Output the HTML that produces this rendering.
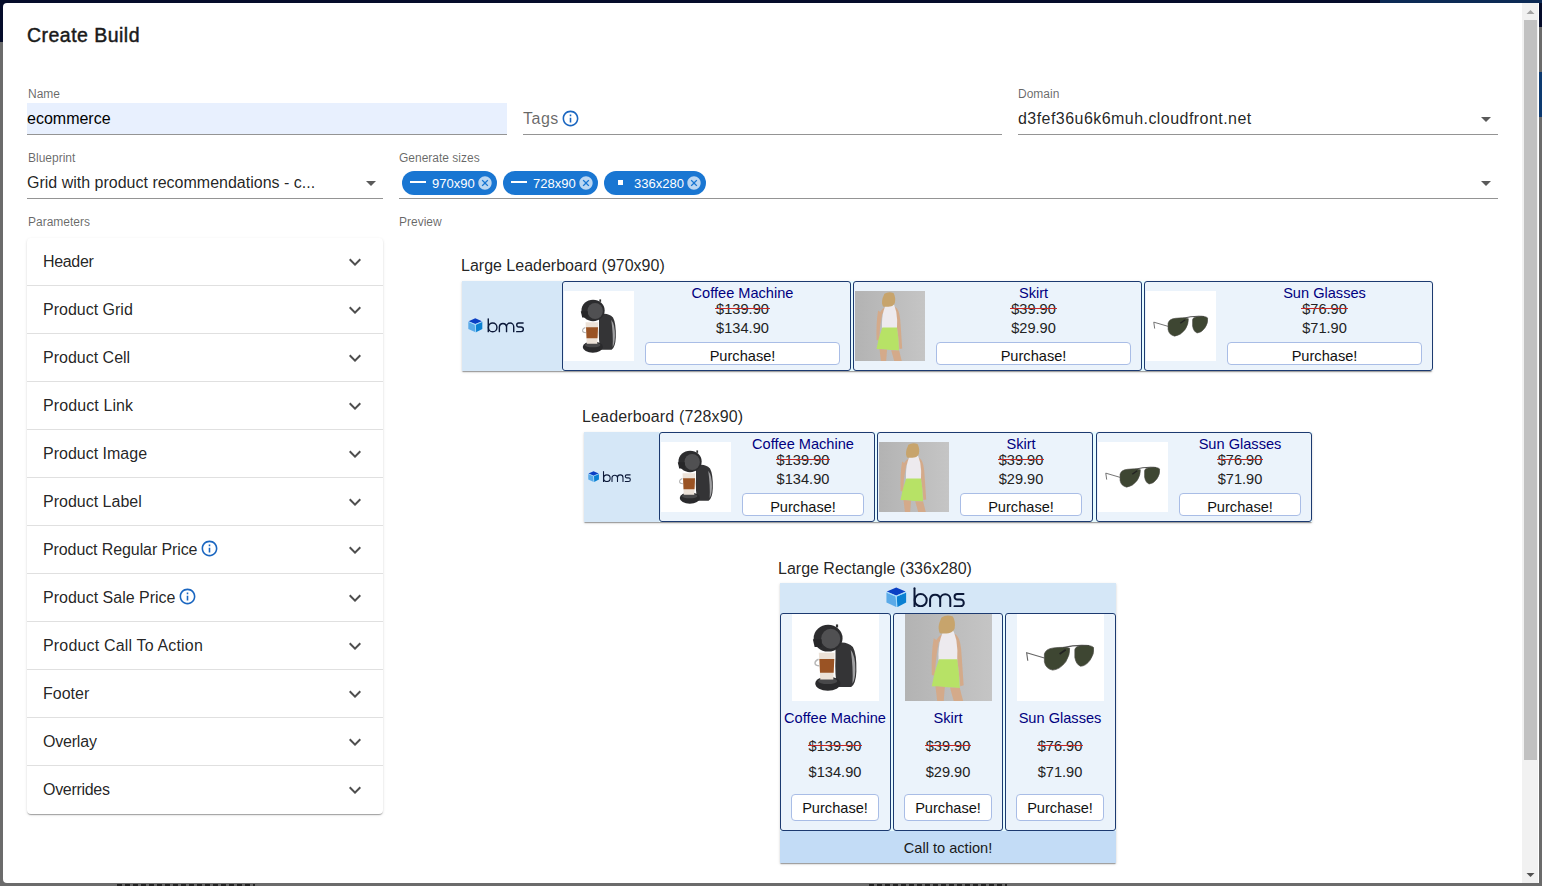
<!DOCTYPE html>
<html><head><meta charset="utf-8">
<style>
*{box-sizing:border-box;margin:0;padding:0}
html,body{width:1542px;height:886px;overflow:hidden}
body{position:relative;background:#6b6b6b;font-family:"Liberation Sans",sans-serif;color:rgba(0,0,0,0.87)}
.abs{position:absolute}
.t{position:absolute;white-space:nowrap;line-height:1}
svg.abs{display:block}
.st{position:relative}
.st::after{content:'';position:absolute;left:-1px;right:-1px;top:7px;height:1.4px;background:#c62828}
</style></head><body>
<div class="abs" style="left:0px;top:0px;width:1542px;height:42px;background:#050c2a"></div>
<div class="abs" style="left:1380px;top:0px;width:162px;height:3px;background:#0c2a55"></div>
<div class="abs" style="left:1539px;top:27px;width:3px;height:45px;background:#6b6b6b"></div>
<div class="abs" style="left:1539px;top:72px;width:3px;height:45px;background:#0d3a70"></div>
<div class="abs" style="left:3px;top:3px;width:1536px;height:880px;background:#fff;border-radius:4px 0 0 4px"></div>
<div class="abs" style="left:117px;top:884px;width:138px;height:2px;background:repeating-linear-gradient(90deg,#222 0 5px,#666 5px 8px)"></div>
<div class="abs" style="left:869px;top:884px;width:138px;height:2px;background:repeating-linear-gradient(90deg,#222 0 5px,#666 5px 8px)"></div>
<div class="abs" style="left:1522px;top:3px;width:16px;height:880px;background:#f1f1f1"></div>
<div class="abs" style="left:1524px;top:20px;width:13px;height:740px;background:#c1c1c1"></div>
<svg class="abs" style="left:1526px;top:9px" width="9" height="6" viewBox="0 0 9 6"><path d="M0.5 5 L4.5 1 L8.5 5z" fill="#a3a3a3"/></svg>
<svg class="abs" style="left:1526px;top:872px" width="9" height="6" viewBox="0 0 9 6"><path d="M0.5 1 L4.5 5 L8.5 1z" fill="#505050"/></svg>
<div class="t" style="left:27px;top:26.49px;font-size:19.5px;color:#1a1a1a;-webkit-text-stroke:0.45px #1a1a1a;letter-spacing:0.47px;">Create Build</div>
<div class="t" style="left:28px;top:87.84px;font-size:12px;color:rgba(0,0,0,0.6);">Name</div>
<div class="abs" style="left:27px;top:103px;width:480px;height:31px;background:#e8f0fe"></div>
<div class="abs" style="left:27px;top:134px;width:480px;height:1px;background:rgba(0,0,0,0.42)"></div>
<div class="t" style="left:27px;top:111.46px;font-size:16px;color:#000;">ecommerce</div>
<div class="t" style="left:523px;top:110.96px;font-size:16px;color:rgba(0,0,0,0.6);letter-spacing:0.5px;">Tags</div>
<svg class="abs" style="left:560.8px;top:108.8px" width="19" height="19" viewBox="0 0 24 24" fill="#1a66c0"><path d="M11 7h2v2h-2zm0 4h2v6h-2zm1-9C6.48 2 2 6.48 2 12s4.48 10 10 10 10-4.48 10-10S17.52 2 12 2zm0 18c-4.41 0-8-3.59-8-8s3.59-8 8-8 8 3.59 8 8-3.59 8-8 8z"/></svg>
<div class="abs" style="left:523px;top:134px;width:479px;height:1px;background:rgba(0,0,0,0.42)"></div>
<div class="t" style="left:1018px;top:87.84px;font-size:12px;color:rgba(0,0,0,0.6);">Domain</div>
<div class="t" style="left:1018px;top:111.46px;font-size:16px;letter-spacing:0.45px;">d3fef36u6k6muh.cloudfront.net</div>
<svg class="abs" style="left:1474px;top:107px" width="24" height="24" viewBox="0 0 24 24" fill="#5a5a5a"><path d="M7 10l5 5 5-5z"/></svg>
<div class="abs" style="left:1018px;top:134px;width:480px;height:1px;background:rgba(0,0,0,0.42)"></div>
<div class="t" style="left:28px;top:151.84px;font-size:12px;color:rgba(0,0,0,0.6);">Blueprint</div>
<div class="t" style="left:27px;top:175.46px;font-size:16px;">Grid with product recommendations - c...</div>
<svg class="abs" style="left:359px;top:171px" width="24" height="24" viewBox="0 0 24 24" fill="#5a5a5a"><path d="M7 10l5 5 5-5z"/></svg>
<div class="abs" style="left:27px;top:198px;width:356px;height:1px;background:rgba(0,0,0,0.42)"></div>
<div class="t" style="left:399px;top:151.84px;font-size:12px;color:rgba(0,0,0,0.6);">Generate sizes</div>
<div class="abs" style="left:399px;top:198px;width:1099px;height:1px;background:rgba(0,0,0,0.42)"></div>
<svg class="abs" style="left:1474px;top:171px" width="24" height="24" viewBox="0 0 24 24" fill="#5a5a5a"><path d="M7 10l5 5 5-5z"/></svg>
<div class="abs" style="left:402px;top:171px;width:95px;height:24px;background:#1976d2;border-radius:12px"></div>
<div class="abs" style="left:410px;top:181px;width:16px;height:2px;background:#fff"></div>
<div class="t" style="left:432px;top:176.50px;font-size:13px;color:#fff;">970x90</div>
<svg class="abs" style="left:477px;top:175px" width="16" height="16" viewBox="0 0 24 24" fill="rgba(255,255,255,0.7)"><path d="M12 2C6.47 2 2 6.47 2 12s4.47 10 10 10 10-4.47 10-10S17.53 2 12 2zm5 13.59L15.59 17 12 13.41 8.41 17 7 15.59 10.59 12 7 8.41 8.41 7 12 10.59 15.59 7 17 8.41 13.41 12 17 15.59z"/></svg>
<div class="abs" style="left:503px;top:171px;width:95px;height:24px;background:#1976d2;border-radius:12px"></div>
<div class="abs" style="left:511px;top:181px;width:16px;height:2px;background:#fff"></div>
<div class="t" style="left:533px;top:176.50px;font-size:13px;color:#fff;">728x90</div>
<svg class="abs" style="left:578px;top:175px" width="16" height="16" viewBox="0 0 24 24" fill="rgba(255,255,255,0.7)"><path d="M12 2C6.47 2 2 6.47 2 12s4.47 10 10 10 10-4.47 10-10S17.53 2 12 2zm5 13.59L15.59 17 12 13.41 8.41 17 7 15.59 10.59 12 7 8.41 8.41 7 12 10.59 15.59 7 17 8.41 13.41 12 17 15.59z"/></svg>
<div class="abs" style="left:604px;top:171px;width:102px;height:24px;background:#1976d2;border-radius:12px"></div>
<div class="abs" style="left:618px;top:180px;width:5px;height:5px;background:#fff"></div>
<div class="t" style="left:634px;top:176.50px;font-size:13px;color:#fff;">336x280</div>
<svg class="abs" style="left:686px;top:175px" width="16" height="16" viewBox="0 0 24 24" fill="rgba(255,255,255,0.7)"><path d="M12 2C6.47 2 2 6.47 2 12s4.47 10 10 10 10-4.47 10-10S17.53 2 12 2zm5 13.59L15.59 17 12 13.41 8.41 17 7 15.59 10.59 12 7 8.41 8.41 7 12 10.59 15.59 7 17 8.41 13.41 12 17 15.59z"/></svg>
<div class="t" style="left:28px;top:215.84px;font-size:12px;color:rgba(0,0,0,0.6);">Parameters</div>
<div class="t" style="left:399px;top:215.84px;font-size:12px;color:rgba(0,0,0,0.6);">Preview</div>
<div class="abs" style="left:27px;top:238px;width:356px;height:576px;background:#fff;border-radius:4px;box-shadow:0px 2px 1px -1px rgba(0,0,0,0.2),0px 1px 1px 0px rgba(0,0,0,0.14),0px 1px 3px 0px rgba(0,0,0,0.12)"></div>
<div class="t" style="left:43px;top:254.46px;font-size:16px;letter-spacing:-0.33px;">Header</div>
<svg class="abs" style="left:343px;top:250px" width="24" height="24" viewBox="0 0 24 24" fill="#4e4e4e"><path d="M16.59 8.59 12 13.17 7.41 8.59 6 10l6 6 6-6z"/></svg>
<div class="abs" style="left:27px;top:285px;width:356px;height:1px;background:rgba(0,0,0,0.12)"></div>
<div class="t" style="left:43px;top:302.46px;font-size:16px;letter-spacing:0px;">Product Grid</div>
<svg class="abs" style="left:343px;top:298px" width="24" height="24" viewBox="0 0 24 24" fill="#4e4e4e"><path d="M16.59 8.59 12 13.17 7.41 8.59 6 10l6 6 6-6z"/></svg>
<div class="abs" style="left:27px;top:333px;width:356px;height:1px;background:rgba(0,0,0,0.12)"></div>
<div class="t" style="left:43px;top:350.46px;font-size:16px;letter-spacing:0px;">Product Cell</div>
<svg class="abs" style="left:343px;top:346px" width="24" height="24" viewBox="0 0 24 24" fill="#4e4e4e"><path d="M16.59 8.59 12 13.17 7.41 8.59 6 10l6 6 6-6z"/></svg>
<div class="abs" style="left:27px;top:381px;width:356px;height:1px;background:rgba(0,0,0,0.12)"></div>
<div class="t" style="left:43px;top:398.46px;font-size:16px;letter-spacing:0.1px;">Product Link</div>
<svg class="abs" style="left:343px;top:394px" width="24" height="24" viewBox="0 0 24 24" fill="#4e4e4e"><path d="M16.59 8.59 12 13.17 7.41 8.59 6 10l6 6 6-6z"/></svg>
<div class="abs" style="left:27px;top:429px;width:356px;height:1px;background:rgba(0,0,0,0.12)"></div>
<div class="t" style="left:43px;top:446.46px;font-size:16px;letter-spacing:0px;">Product Image</div>
<svg class="abs" style="left:343px;top:442px" width="24" height="24" viewBox="0 0 24 24" fill="#4e4e4e"><path d="M16.59 8.59 12 13.17 7.41 8.59 6 10l6 6 6-6z"/></svg>
<div class="abs" style="left:27px;top:477px;width:356px;height:1px;background:rgba(0,0,0,0.12)"></div>
<div class="t" style="left:43px;top:494.46px;font-size:16px;letter-spacing:0px;">Product Label</div>
<svg class="abs" style="left:343px;top:490px" width="24" height="24" viewBox="0 0 24 24" fill="#4e4e4e"><path d="M16.59 8.59 12 13.17 7.41 8.59 6 10l6 6 6-6z"/></svg>
<div class="abs" style="left:27px;top:525px;width:356px;height:1px;background:rgba(0,0,0,0.12)"></div>
<div class="t" style="left:43px;top:542.46px;font-size:16px;letter-spacing:-0.1px;">Product Regular Price</div>
<svg class="abs" style="left:200.4px;top:538.7px" width="19" height="19" viewBox="0 0 24 24" fill="#1a66c0"><path d="M11 7h2v2h-2zm0 4h2v6h-2zm1-9C6.48 2 2 6.48 2 12s4.48 10 10 10 10-4.48 10-10S17.52 2 12 2zm0 18c-4.41 0-8-3.59-8-8s3.59-8 8-8 8 3.59 8 8-3.59 8-8 8z"/></svg>
<svg class="abs" style="left:343px;top:538px" width="24" height="24" viewBox="0 0 24 24" fill="#4e4e4e"><path d="M16.59 8.59 12 13.17 7.41 8.59 6 10l6 6 6-6z"/></svg>
<div class="abs" style="left:27px;top:573px;width:356px;height:1px;background:rgba(0,0,0,0.12)"></div>
<div class="t" style="left:43px;top:590.46px;font-size:16px;letter-spacing:0px;">Product Sale Price</div>
<svg class="abs" style="left:177.5px;top:586.7px" width="19" height="19" viewBox="0 0 24 24" fill="#1a66c0"><path d="M11 7h2v2h-2zm0 4h2v6h-2zm1-9C6.48 2 2 6.48 2 12s4.48 10 10 10 10-4.48 10-10S17.52 2 12 2zm0 18c-4.41 0-8-3.59-8-8s3.59-8 8-8 8 3.59 8 8-3.59 8-8 8z"/></svg>
<svg class="abs" style="left:343px;top:586px" width="24" height="24" viewBox="0 0 24 24" fill="#4e4e4e"><path d="M16.59 8.59 12 13.17 7.41 8.59 6 10l6 6 6-6z"/></svg>
<div class="abs" style="left:27px;top:621px;width:356px;height:1px;background:rgba(0,0,0,0.12)"></div>
<div class="t" style="left:43px;top:638.46px;font-size:16px;letter-spacing:0.17px;">Product Call To Action</div>
<svg class="abs" style="left:343px;top:634px" width="24" height="24" viewBox="0 0 24 24" fill="#4e4e4e"><path d="M16.59 8.59 12 13.17 7.41 8.59 6 10l6 6 6-6z"/></svg>
<div class="abs" style="left:27px;top:669px;width:356px;height:1px;background:rgba(0,0,0,0.12)"></div>
<div class="t" style="left:43px;top:686.46px;font-size:16px;letter-spacing:0px;">Footer</div>
<svg class="abs" style="left:343px;top:682px" width="24" height="24" viewBox="0 0 24 24" fill="#4e4e4e"><path d="M16.59 8.59 12 13.17 7.41 8.59 6 10l6 6 6-6z"/></svg>
<div class="abs" style="left:27px;top:717px;width:356px;height:1px;background:rgba(0,0,0,0.12)"></div>
<div class="t" style="left:43px;top:734.46px;font-size:16px;letter-spacing:-0.2px;">Overlay</div>
<svg class="abs" style="left:343px;top:730px" width="24" height="24" viewBox="0 0 24 24" fill="#4e4e4e"><path d="M16.59 8.59 12 13.17 7.41 8.59 6 10l6 6 6-6z"/></svg>
<div class="abs" style="left:27px;top:765px;width:356px;height:1px;background:rgba(0,0,0,0.12)"></div>
<div class="t" style="left:43px;top:782.46px;font-size:16px;letter-spacing:-0.3px;">Overrides</div>
<svg class="abs" style="left:343px;top:778px" width="24" height="24" viewBox="0 0 24 24" fill="#4e4e4e"><path d="M16.59 8.59 12 13.17 7.41 8.59 6 10l6 6 6-6z"/></svg>
<div class="t" style="left:461px;top:258.46px;font-size:16px;">Large Leaderboard (970x90)</div>
<div class="abs" style="left:462px;top:281px;width:970px;height:90px;background:#e6fbff;box-shadow:0px 2px 1px -1px rgba(0,0,0,0.2),0px 1px 1px 0px rgba(0,0,0,0.14),0px 1px 3px 0px rgba(0,0,0,0.12)"></div>
<div class="abs" style="left:462px;top:281px;width:100px;height:90px;background:#d5e7f7"></div>
<svg class="abs" style="left:468px;top:318px" width="56.2" height="14.51" viewBox="0 0 79 20.4"><g>
<path d="M10.2 0.4 L19.6 4.5 L10.2 8.6 L0.8 4.5z" fill="#0a3fc4"/>
<path d="M0.4 5.4 L9.6 9.4 L10.6 20.2 L0.4 15.5z" fill="#5aaae8"/>
<path d="M10.8 9.4 L20.1 5.4 L20.1 15.5 L11.2 20.2z" fill="#0a80d2"/>
<path d="M0.4 5.2 L10.2 9.2 L20.1 5.2 M10.2 9.2 L10.9 20.4" stroke="#9ad8ff" stroke-width="0.9" fill="none"/>
<g fill="none" stroke="#0b1838" stroke-width="2" stroke-linecap="round">
<path d="M28.5 1.2 V19.2"/>
<ellipse cx="34.7" cy="13.2" rx="6" ry="6.1"/>
<path d="M44.1 19.2 V12.2 A5.1 5.1 0 0 1 54.2 12.2 V19.2 M54.2 12.2 A5.05 5.05 0 0 1 64.3 12.2 V19.2"/>
<path d="M77.5 7.1 H71.3 A2.75 2.75 0 0 0 71.3 12.6 H74.5 A3.3 3.3 0 0 1 74.5 19.2 H68.5"/>
</g></g></svg>
<div class="abs" style="left:562px;top:281px;width:289px;height:90px;background:#ebf3fb;border:1px solid #1c3a70;border-radius:3px"></div>
<svg class="abs" style="left:564px;top:291px" width="70" height="70" viewBox="0 0 100 100" preserveAspectRatio="none"><rect width="100" height="100" fill="#fff"/>
<path d="M50 34 Q62 30 70 38 Q74.5 46 74 66 Q73.5 80 68 84 L52 84 Q49 70 50 50z" fill="#343436"/>
<path d="M67.5 41 Q73 48 72.8 64 Q72.5 76 69.5 80 Q70.5 62 67.5 41z" fill="#a0a0a2"/>
<ellipse cx="41.5" cy="27.8" rx="16.6" ry="15.4" fill="#2c2c2e"/>
<ellipse cx="44.5" cy="28.5" rx="11" ry="11.5" fill="#505052"/>
<path d="M24 29 L34 29 L34 38 L26 38z" fill="#262628"/>
<rect x="50.5" y="12" width="2.5" height="3.5" fill="#333"/>
<ellipse cx="41.2" cy="80" rx="14.4" ry="8.2" fill="#2a2a2c"/>
<ellipse cx="41" cy="77" rx="11" ry="3.5" fill="#48484a"/>
<path d="M30.8 44.5 L49 44.5 L47.5 75.3 L32.5 75.3z" fill="#ece2d8"/>
<path d="M31.5 51.7 L48.6 51.7 L47.9 67.4 L32.2 67.4z" fill="#9a5324"/>
<path d="M30.5 52 Q26 54 26.5 57 Q27 59.5 31.4 59.6" stroke="#b5b5b5" stroke-width="1.6" fill="none"/></svg>
<div class="t" style="left:542.5px;width:400px;text-align:center;top:285.64px;font-size:14.6px;color:#000080;">Coffee Machine</div>
<div class="t" style="left:542.5px;width:400px;text-align:center;top:301.64px;font-size:14.6px;color:#222;"><span class="st">$139.90</span></div>
<div class="t" style="left:542.5px;width:400px;text-align:center;top:320.64px;font-size:14.6px;color:#222;">$134.90</div>
<div class="abs" style="left:645px;top:342px;width:195px;height:23px;background:#fff;border:1px solid #a9bde6;border-radius:4px"></div>
<div class="t" style="left:542.5px;width:400px;text-align:center;top:348.64px;font-size:14.6px;color:#111;">Purchase!</div>
<div class="abs" style="left:853px;top:281px;width:289px;height:90px;background:#ebf3fb;border:1px solid #1c3a70;border-radius:3px"></div>
<svg class="abs" style="left:855px;top:291px" width="70" height="70" viewBox="0 0 100 100" preserveAspectRatio="none"><defs><linearGradient id="bgs" x1="0" x2="1"><stop offset="0" stop-color="#b3b3b3"/><stop offset="1" stop-color="#c5c5c5"/></linearGradient></defs>
<rect width="100" height="100" fill="url(#bgs)"/>
<path d="M33 28 Q30 45 30.8 70 L34.5 71 Q35 50 39 32z" fill="#d4aa8a"/>
<path d="M57.6 23 Q63 26 64.5 40 Q66 60 67.4 82 L63.5 83 Q62 62 58 40z" fill="#d4aa8a"/>
<path d="M35 32 Q39 24 44 23 L56 22 Q60 24 60 32z" fill="#d4aa8a"/>
<path d="M44 19 Q50 17 56 20 L59 30 Q61 42 60 53.5 L38.5 53.5 Q38 38 41 28z" fill="#edeaee"/>
<path d="M42 4 Q48 0 55 3 Q58.5 9 57 17 Q54 22 50 22 Q45 23 40 22 Q37.5 17 39.5 10z" fill="#c7a46c"/>
<path d="M39 52 L60 52 Q62.5 68 63 85 L30.8 83 Q33 68 39 52z" fill="#b7e266"/>
<path d="M35 83 L45.8 84 L44.5 100 L37 100z" fill="#d4aa8a"/>
<path d="M51.7 84.5 L63 85 L66.8 100 L56 100z" fill="#d4aa8a"/></svg>
<div class="t" style="left:833.5px;width:400px;text-align:center;top:285.64px;font-size:14.6px;color:#000080;">Skirt</div>
<div class="t" style="left:833.5px;width:400px;text-align:center;top:301.64px;font-size:14.6px;color:#222;"><span class="st">$39.90</span></div>
<div class="t" style="left:833.5px;width:400px;text-align:center;top:320.64px;font-size:14.6px;color:#222;">$29.90</div>
<div class="abs" style="left:936px;top:342px;width:195px;height:23px;background:#fff;border:1px solid #a9bde6;border-radius:4px"></div>
<div class="t" style="left:833.5px;width:400px;text-align:center;top:348.64px;font-size:14.6px;color:#111;">Purchase!</div>
<div class="abs" style="left:1144px;top:281px;width:289px;height:90px;background:#ebf3fb;border:1px solid #1c3a70;border-radius:3px"></div>
<svg class="abs" style="left:1146px;top:291px" width="70" height="70" viewBox="0 0 100 100" preserveAspectRatio="none"><rect width="100" height="100" fill="#fff"/>
<path d="M12.4 53.7 L11.1 44.5 L31.5 50.5" stroke="#666" stroke-width="1.3" fill="none"/>
<path d="M53 38.8 Q68 35 83 36.5" stroke="#555" stroke-width="1.5" fill="none"/>
<path d="M31.5 46 Q33 40 42 39 Q55 37.5 60.5 39.5 Q61 47 56 55 Q49 64 41 64.5 Q33 63 31.5 55z" fill="#3e4632" stroke="#4a4a44" stroke-width="0.8"/>
<path d="M66.5 41 Q67 37 75 36.3 Q85 35.5 88 38.5 Q89 46 84 53 Q79 60 73 60 Q68 58 66.5 50z" fill="#3e4632" stroke="#4a4a44" stroke-width="0.8"/>
<path d="M49 46 L56 41" stroke="#222" stroke-width="2"/></svg>
<div class="t" style="left:1124.5px;width:400px;text-align:center;top:285.64px;font-size:14.6px;color:#000080;">Sun Glasses</div>
<div class="t" style="left:1124.5px;width:400px;text-align:center;top:301.64px;font-size:14.6px;color:#222;"><span class="st">$76.90</span></div>
<div class="t" style="left:1124.5px;width:400px;text-align:center;top:320.64px;font-size:14.6px;color:#222;">$71.90</div>
<div class="abs" style="left:1227px;top:342px;width:195px;height:23px;background:#fff;border:1px solid #a9bde6;border-radius:4px"></div>
<div class="t" style="left:1124.5px;width:400px;text-align:center;top:348.64px;font-size:14.6px;color:#111;">Purchase!</div>
<div class="t" style="left:582px;top:408.96px;font-size:16px;letter-spacing:0.15px;">Leaderboard (728x90)</div>
<div class="abs" style="left:584px;top:432px;width:728px;height:90px;background:#e6fbff;box-shadow:0px 2px 1px -1px rgba(0,0,0,0.2),0px 1px 1px 0px rgba(0,0,0,0.14),0px 1px 3px 0px rgba(0,0,0,0.12)"></div>
<div class="abs" style="left:584px;top:432px;width:75px;height:90px;background:#d5e7f7"></div>
<svg class="abs" style="left:588px;top:471px" width="43" height="11.10" viewBox="0 0 79 20.4"><g>
<path d="M10.2 0.4 L19.6 4.5 L10.2 8.6 L0.8 4.5z" fill="#0a3fc4"/>
<path d="M0.4 5.4 L9.6 9.4 L10.6 20.2 L0.4 15.5z" fill="#5aaae8"/>
<path d="M10.8 9.4 L20.1 5.4 L20.1 15.5 L11.2 20.2z" fill="#0a80d2"/>
<path d="M0.4 5.2 L10.2 9.2 L20.1 5.2 M10.2 9.2 L10.9 20.4" stroke="#9ad8ff" stroke-width="0.9" fill="none"/>
<g fill="none" stroke="#0b1838" stroke-width="2" stroke-linecap="round">
<path d="M28.5 1.2 V19.2"/>
<ellipse cx="34.7" cy="13.2" rx="6" ry="6.1"/>
<path d="M44.1 19.2 V12.2 A5.1 5.1 0 0 1 54.2 12.2 V19.2 M54.2 12.2 A5.05 5.05 0 0 1 64.3 12.2 V19.2"/>
<path d="M77.5 7.1 H71.3 A2.75 2.75 0 0 0 71.3 12.6 H74.5 A3.3 3.3 0 0 1 74.5 19.2 H68.5"/>
</g></g></svg>
<div class="abs" style="left:659px;top:432px;width:216px;height:90px;background:#ebf3fb;border:1px solid #1c3a70;border-radius:3px"></div>
<svg class="abs" style="left:661px;top:442px" width="70" height="70" viewBox="0 0 100 100" preserveAspectRatio="none"><rect width="100" height="100" fill="#fff"/>
<path d="M50 34 Q62 30 70 38 Q74.5 46 74 66 Q73.5 80 68 84 L52 84 Q49 70 50 50z" fill="#343436"/>
<path d="M67.5 41 Q73 48 72.8 64 Q72.5 76 69.5 80 Q70.5 62 67.5 41z" fill="#a0a0a2"/>
<ellipse cx="41.5" cy="27.8" rx="16.6" ry="15.4" fill="#2c2c2e"/>
<ellipse cx="44.5" cy="28.5" rx="11" ry="11.5" fill="#505052"/>
<path d="M24 29 L34 29 L34 38 L26 38z" fill="#262628"/>
<rect x="50.5" y="12" width="2.5" height="3.5" fill="#333"/>
<ellipse cx="41.2" cy="80" rx="14.4" ry="8.2" fill="#2a2a2c"/>
<ellipse cx="41" cy="77" rx="11" ry="3.5" fill="#48484a"/>
<path d="M30.8 44.5 L49 44.5 L47.5 75.3 L32.5 75.3z" fill="#ece2d8"/>
<path d="M31.5 51.7 L48.6 51.7 L47.9 67.4 L32.2 67.4z" fill="#9a5324"/>
<path d="M30.5 52 Q26 54 26.5 57 Q27 59.5 31.4 59.6" stroke="#b5b5b5" stroke-width="1.6" fill="none"/></svg>
<div class="t" style="left:603px;width:400px;text-align:center;top:436.64px;font-size:14.6px;color:#000080;">Coffee Machine</div>
<div class="t" style="left:603px;width:400px;text-align:center;top:452.64px;font-size:14.6px;color:#222;"><span class="st">$139.90</span></div>
<div class="t" style="left:603px;width:400px;text-align:center;top:471.64px;font-size:14.6px;color:#222;">$134.90</div>
<div class="abs" style="left:742px;top:493px;width:122px;height:23px;background:#fff;border:1px solid #a9bde6;border-radius:4px"></div>
<div class="t" style="left:603px;width:400px;text-align:center;top:499.64px;font-size:14.6px;color:#111;">Purchase!</div>
<div class="abs" style="left:877px;top:432px;width:216px;height:90px;background:#ebf3fb;border:1px solid #1c3a70;border-radius:3px"></div>
<svg class="abs" style="left:879px;top:442px" width="70" height="70" viewBox="0 0 100 100" preserveAspectRatio="none"><defs><linearGradient id="bgs" x1="0" x2="1"><stop offset="0" stop-color="#b3b3b3"/><stop offset="1" stop-color="#c5c5c5"/></linearGradient></defs>
<rect width="100" height="100" fill="url(#bgs)"/>
<path d="M33 28 Q30 45 30.8 70 L34.5 71 Q35 50 39 32z" fill="#d4aa8a"/>
<path d="M57.6 23 Q63 26 64.5 40 Q66 60 67.4 82 L63.5 83 Q62 62 58 40z" fill="#d4aa8a"/>
<path d="M35 32 Q39 24 44 23 L56 22 Q60 24 60 32z" fill="#d4aa8a"/>
<path d="M44 19 Q50 17 56 20 L59 30 Q61 42 60 53.5 L38.5 53.5 Q38 38 41 28z" fill="#edeaee"/>
<path d="M42 4 Q48 0 55 3 Q58.5 9 57 17 Q54 22 50 22 Q45 23 40 22 Q37.5 17 39.5 10z" fill="#c7a46c"/>
<path d="M39 52 L60 52 Q62.5 68 63 85 L30.8 83 Q33 68 39 52z" fill="#b7e266"/>
<path d="M35 83 L45.8 84 L44.5 100 L37 100z" fill="#d4aa8a"/>
<path d="M51.7 84.5 L63 85 L66.8 100 L56 100z" fill="#d4aa8a"/></svg>
<div class="t" style="left:821px;width:400px;text-align:center;top:436.64px;font-size:14.6px;color:#000080;">Skirt</div>
<div class="t" style="left:821px;width:400px;text-align:center;top:452.64px;font-size:14.6px;color:#222;"><span class="st">$39.90</span></div>
<div class="t" style="left:821px;width:400px;text-align:center;top:471.64px;font-size:14.6px;color:#222;">$29.90</div>
<div class="abs" style="left:960px;top:493px;width:122px;height:23px;background:#fff;border:1px solid #a9bde6;border-radius:4px"></div>
<div class="t" style="left:821px;width:400px;text-align:center;top:499.64px;font-size:14.6px;color:#111;">Purchase!</div>
<div class="abs" style="left:1096px;top:432px;width:216px;height:90px;background:#ebf3fb;border:1px solid #1c3a70;border-radius:3px"></div>
<svg class="abs" style="left:1098px;top:442px" width="70" height="70" viewBox="0 0 100 100" preserveAspectRatio="none"><rect width="100" height="100" fill="#fff"/>
<path d="M12.4 53.7 L11.1 44.5 L31.5 50.5" stroke="#666" stroke-width="1.3" fill="none"/>
<path d="M53 38.8 Q68 35 83 36.5" stroke="#555" stroke-width="1.5" fill="none"/>
<path d="M31.5 46 Q33 40 42 39 Q55 37.5 60.5 39.5 Q61 47 56 55 Q49 64 41 64.5 Q33 63 31.5 55z" fill="#3e4632" stroke="#4a4a44" stroke-width="0.8"/>
<path d="M66.5 41 Q67 37 75 36.3 Q85 35.5 88 38.5 Q89 46 84 53 Q79 60 73 60 Q68 58 66.5 50z" fill="#3e4632" stroke="#4a4a44" stroke-width="0.8"/>
<path d="M49 46 L56 41" stroke="#222" stroke-width="2"/></svg>
<div class="t" style="left:1040px;width:400px;text-align:center;top:436.64px;font-size:14.6px;color:#000080;">Sun Glasses</div>
<div class="t" style="left:1040px;width:400px;text-align:center;top:452.64px;font-size:14.6px;color:#222;"><span class="st">$76.90</span></div>
<div class="t" style="left:1040px;width:400px;text-align:center;top:471.64px;font-size:14.6px;color:#222;">$71.90</div>
<div class="abs" style="left:1179px;top:493px;width:122px;height:23px;background:#fff;border:1px solid #a9bde6;border-radius:4px"></div>
<div class="t" style="left:1040px;width:400px;text-align:center;top:499.64px;font-size:14.6px;color:#111;">Purchase!</div>
<div class="t" style="left:778px;top:560.96px;font-size:16px;">Large Rectangle (336x280)</div>
<div class="abs" style="left:780px;top:583px;width:336px;height:280px;background:#e6fbff;box-shadow:0px 2px 1px -1px rgba(0,0,0,0.2),0px 1px 1px 0px rgba(0,0,0,0.14),0px 1px 3px 0px rgba(0,0,0,0.12)"></div>
<div class="abs" style="left:780px;top:583px;width:336px;height:31px;background:#d5e7f7"></div>
<svg class="abs" style="left:886px;top:587px" width="79" height="20.40" viewBox="0 0 79 20.4"><g>
<path d="M10.2 0.4 L19.6 4.5 L10.2 8.6 L0.8 4.5z" fill="#0a3fc4"/>
<path d="M0.4 5.4 L9.6 9.4 L10.6 20.2 L0.4 15.5z" fill="#5aaae8"/>
<path d="M10.8 9.4 L20.1 5.4 L20.1 15.5 L11.2 20.2z" fill="#0a80d2"/>
<path d="M0.4 5.2 L10.2 9.2 L20.1 5.2 M10.2 9.2 L10.9 20.4" stroke="#9ad8ff" stroke-width="0.9" fill="none"/>
<g fill="none" stroke="#0b1838" stroke-width="2" stroke-linecap="round">
<path d="M28.5 1.2 V19.2"/>
<ellipse cx="34.7" cy="13.2" rx="6" ry="6.1"/>
<path d="M44.1 19.2 V12.2 A5.1 5.1 0 0 1 54.2 12.2 V19.2 M54.2 12.2 A5.05 5.05 0 0 1 64.3 12.2 V19.2"/>
<path d="M77.5 7.1 H71.3 A2.75 2.75 0 0 0 71.3 12.6 H74.5 A3.3 3.3 0 0 1 74.5 19.2 H68.5"/>
</g></g></svg>
<div class="abs" style="left:780px;top:613px;width:111px;height:218px;background:#ebf3fb;border:1px solid #1c3a70;border-radius:3px"></div>
<svg class="abs" style="left:792px;top:614px" width="87" height="87" viewBox="0 0 100 100" preserveAspectRatio="none"><rect width="100" height="100" fill="#fff"/>
<path d="M50 34 Q62 30 70 38 Q74.5 46 74 66 Q73.5 80 68 84 L52 84 Q49 70 50 50z" fill="#343436"/>
<path d="M67.5 41 Q73 48 72.8 64 Q72.5 76 69.5 80 Q70.5 62 67.5 41z" fill="#a0a0a2"/>
<ellipse cx="41.5" cy="27.8" rx="16.6" ry="15.4" fill="#2c2c2e"/>
<ellipse cx="44.5" cy="28.5" rx="11" ry="11.5" fill="#505052"/>
<path d="M24 29 L34 29 L34 38 L26 38z" fill="#262628"/>
<rect x="50.5" y="12" width="2.5" height="3.5" fill="#333"/>
<ellipse cx="41.2" cy="80" rx="14.4" ry="8.2" fill="#2a2a2c"/>
<ellipse cx="41" cy="77" rx="11" ry="3.5" fill="#48484a"/>
<path d="M30.8 44.5 L49 44.5 L47.5 75.3 L32.5 75.3z" fill="#ece2d8"/>
<path d="M31.5 51.7 L48.6 51.7 L47.9 67.4 L32.2 67.4z" fill="#9a5324"/>
<path d="M30.5 52 Q26 54 26.5 57 Q27 59.5 31.4 59.6" stroke="#b5b5b5" stroke-width="1.6" fill="none"/></svg>
<div class="t" style="left:635px;width:400px;text-align:center;top:710.64px;font-size:14.6px;color:#000080;">Coffee Machine</div>
<div class="t" style="left:635px;width:400px;text-align:center;top:738.64px;font-size:14.6px;color:#222;"><span class="st">$139.90</span></div>
<div class="t" style="left:635px;width:400px;text-align:center;top:764.64px;font-size:14.6px;color:#222;">$134.90</div>
<div class="abs" style="left:791px;top:794px;width:88px;height:27px;background:#fff;border:1px solid #a9bde6;border-radius:4px"></div>
<div class="t" style="left:635px;width:400px;text-align:center;top:800.64px;font-size:14.6px;color:#111;">Purchase!</div>
<div class="abs" style="left:893px;top:613px;width:110px;height:218px;background:#ebf3fb;border:1px solid #1c3a70;border-radius:3px"></div>
<svg class="abs" style="left:905px;top:614px" width="87" height="87" viewBox="0 0 100 100" preserveAspectRatio="none"><defs><linearGradient id="bgs" x1="0" x2="1"><stop offset="0" stop-color="#b3b3b3"/><stop offset="1" stop-color="#c5c5c5"/></linearGradient></defs>
<rect width="100" height="100" fill="url(#bgs)"/>
<path d="M33 28 Q30 45 30.8 70 L34.5 71 Q35 50 39 32z" fill="#d4aa8a"/>
<path d="M57.6 23 Q63 26 64.5 40 Q66 60 67.4 82 L63.5 83 Q62 62 58 40z" fill="#d4aa8a"/>
<path d="M35 32 Q39 24 44 23 L56 22 Q60 24 60 32z" fill="#d4aa8a"/>
<path d="M44 19 Q50 17 56 20 L59 30 Q61 42 60 53.5 L38.5 53.5 Q38 38 41 28z" fill="#edeaee"/>
<path d="M42 4 Q48 0 55 3 Q58.5 9 57 17 Q54 22 50 22 Q45 23 40 22 Q37.5 17 39.5 10z" fill="#c7a46c"/>
<path d="M39 52 L60 52 Q62.5 68 63 85 L30.8 83 Q33 68 39 52z" fill="#b7e266"/>
<path d="M35 83 L45.8 84 L44.5 100 L37 100z" fill="#d4aa8a"/>
<path d="M51.7 84.5 L63 85 L66.8 100 L56 100z" fill="#d4aa8a"/></svg>
<div class="t" style="left:748px;width:400px;text-align:center;top:710.64px;font-size:14.6px;color:#000080;">Skirt</div>
<div class="t" style="left:748px;width:400px;text-align:center;top:738.64px;font-size:14.6px;color:#222;"><span class="st">$39.90</span></div>
<div class="t" style="left:748px;width:400px;text-align:center;top:764.64px;font-size:14.6px;color:#222;">$29.90</div>
<div class="abs" style="left:904px;top:794px;width:88px;height:27px;background:#fff;border:1px solid #a9bde6;border-radius:4px"></div>
<div class="t" style="left:748px;width:400px;text-align:center;top:800.64px;font-size:14.6px;color:#111;">Purchase!</div>
<div class="abs" style="left:1005px;top:613px;width:111px;height:218px;background:#ebf3fb;border:1px solid #1c3a70;border-radius:3px"></div>
<svg class="abs" style="left:1017px;top:614px" width="87" height="87" viewBox="0 0 100 100" preserveAspectRatio="none"><rect width="100" height="100" fill="#fff"/>
<path d="M12.4 53.7 L11.1 44.5 L31.5 50.5" stroke="#666" stroke-width="1.3" fill="none"/>
<path d="M53 38.8 Q68 35 83 36.5" stroke="#555" stroke-width="1.5" fill="none"/>
<path d="M31.5 46 Q33 40 42 39 Q55 37.5 60.5 39.5 Q61 47 56 55 Q49 64 41 64.5 Q33 63 31.5 55z" fill="#3e4632" stroke="#4a4a44" stroke-width="0.8"/>
<path d="M66.5 41 Q67 37 75 36.3 Q85 35.5 88 38.5 Q89 46 84 53 Q79 60 73 60 Q68 58 66.5 50z" fill="#3e4632" stroke="#4a4a44" stroke-width="0.8"/>
<path d="M49 46 L56 41" stroke="#222" stroke-width="2"/></svg>
<div class="t" style="left:860px;width:400px;text-align:center;top:710.64px;font-size:14.6px;color:#000080;">Sun Glasses</div>
<div class="t" style="left:860px;width:400px;text-align:center;top:738.64px;font-size:14.6px;color:#222;"><span class="st">$76.90</span></div>
<div class="t" style="left:860px;width:400px;text-align:center;top:764.64px;font-size:14.6px;color:#222;">$71.90</div>
<div class="abs" style="left:1016px;top:794px;width:88px;height:27px;background:#fff;border:1px solid #a9bde6;border-radius:4px"></div>
<div class="t" style="left:860px;width:400px;text-align:center;top:800.64px;font-size:14.6px;color:#111;">Purchase!</div>
<div class="abs" style="left:780px;top:831px;width:336px;height:32px;background:#c3dcf6"></div>
<div class="t" style="left:748px;width:400px;text-align:center;top:840.64px;font-size:14.6px;color:#1a1a1a;">Call to action!</div>
</body></html>
